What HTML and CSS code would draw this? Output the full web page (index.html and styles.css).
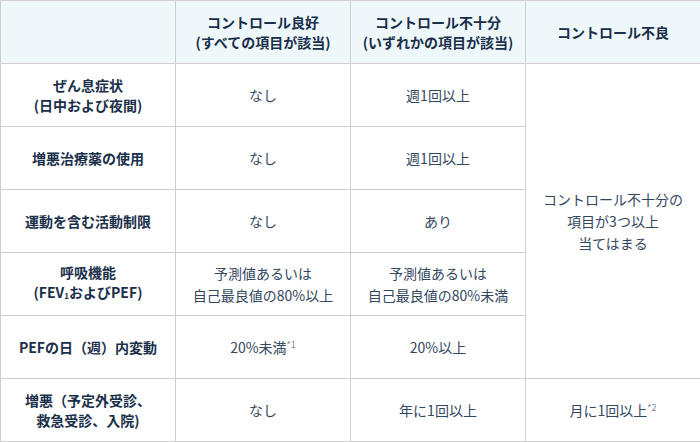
FILE: index.html
```html
<!DOCTYPE html>
<html lang="ja">
<head>
<meta charset="utf-8">
<link rel="stylesheet" href="styles.css">
</head>
<body>
<table class="ctl">
  <colgroup>
    <col class="c1"><col class="c2"><col class="c3"><col class="c4">
  </colgroup>
  <thead>
    <tr>
      <th></th>
      <th>コントロール良好<br>(すべての項目が該当)</th>
      <th>コントロール不十分<br>(いずれかの項目が該当)</th>
      <th>コントロール不良</th>
    </tr>
  </thead>
  <tbody>
    <tr>
      <th>ぜん息症状<br>(日中および夜間)</th>
      <td>なし</td>
      <td>週1回以上</td>
      <td rowspan="5">コントロール不十分の<br>項目が3つ以上<br>当てはまる</td>
    </tr>
    <tr>
      <th>増悪治療薬の使用</th>
      <td>なし</td>
      <td>週1回以上</td>
    </tr>
    <tr>
      <th>運動を含む活動制限</th>
      <td>なし</td>
      <td>あり</td>
    </tr>
    <tr>
      <th>呼吸機能<br>(FEV<span class="sub">1</span>およびPEF)</th>
      <td>予測値あるいは<br>自己最良値の80%以上</td>
      <td>予測値あるいは<br>自己最良値の80%未満</td>
    </tr>
    <tr>
      <th>PEFの日（週）内変動</th>
      <td>20%未満<span class="note">*1</span></td>
      <td>20%以上</td>
    </tr>
    <tr>
      <th>増悪（予定外受診、<br>救急受診、入院)</th>
      <td>なし</td>
      <td>年に1回以上</td>
      <td>月に1回以上<span class="note">*2</span></td>
    </tr>
  </tbody>
</table>
</body>
</html>
```

FILE: styles.css
```css
html, body {
  margin: 0;
  padding: 0;
  background: #ffffff;
}
body {
  font-family: "Noto Sans CJK JP", "Noto Sans", sans-serif;
}
.ctl {
  border-collapse: collapse;
  width: 700px;
  table-layout: fixed;
}
.c1, .c2, .c3, .c4 { width: 175px; }
.ctl th, .ctl td {
  border: 1px solid #cfcfcf;
  height: 62px;
  padding: 0;
  text-align: center;
  vertical-align: middle;
}
.ctl th {
  font-weight: bold;
  font-size: 14px;
  line-height: 20px;
  color: #1a2f4a;
}
.ctl thead th {
  background: #eef7fa;
}
.ctl td {
  font-size: 14px;
  line-height: 22px;
  color: #33485f;
}
.sub {
  font-size: 8px;
  vertical-align: -1px;
}
.note {
  font-size: 9px;
  vertical-align: 5px;
  line-height: 1;
  color: #7a8896;
  margin-left: 0;
}
```
